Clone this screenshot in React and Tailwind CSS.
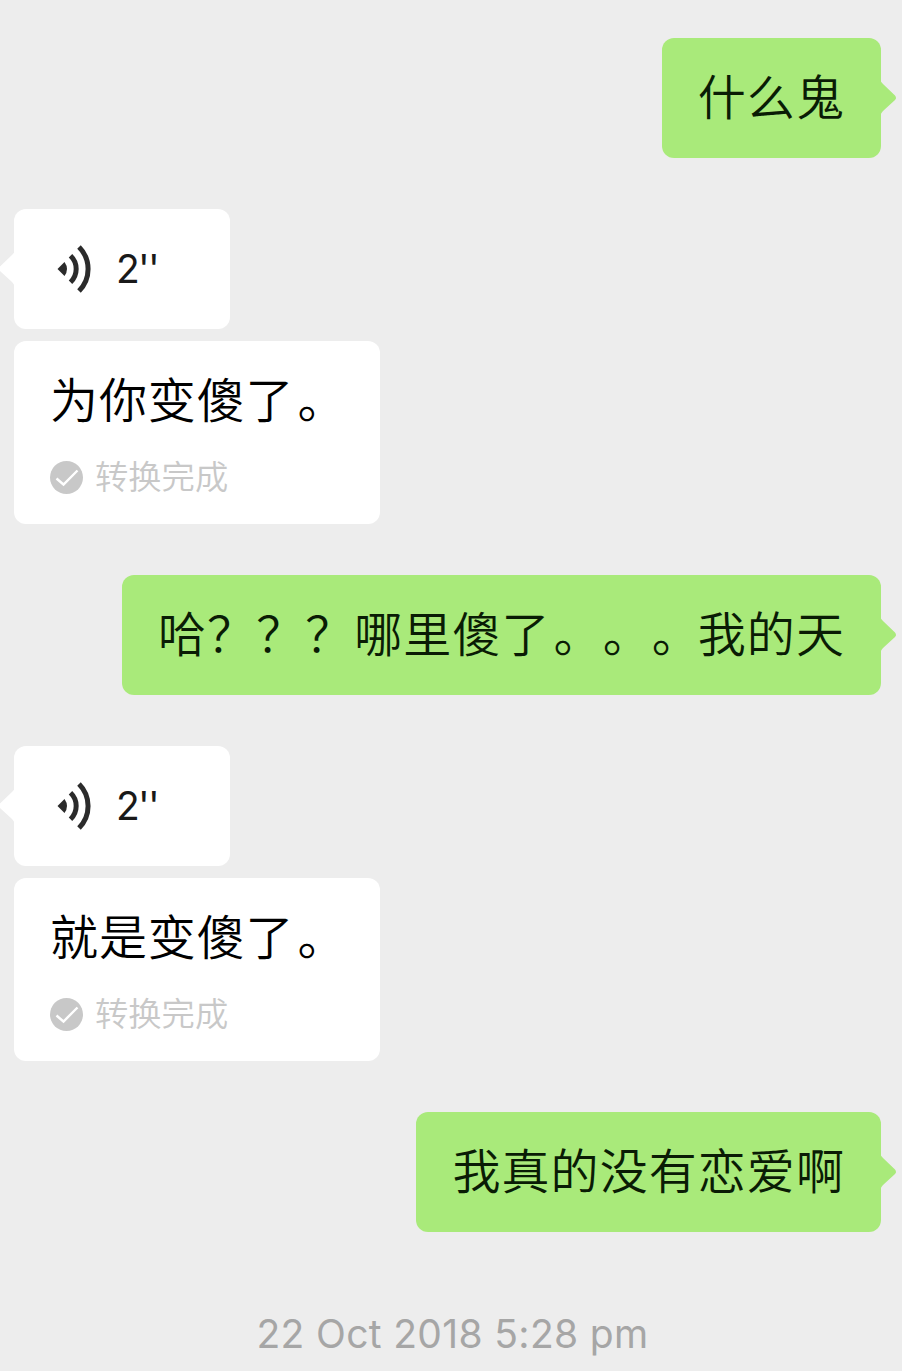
import React from 'react';

const messages = [
  { id: 1, type: 'sent', text: '什么鬼' },
  { id: 2, type: 'voice', seconds: 2, text: '为你变傻了。' },
  { id: 3, type: 'sent', text: '哈？？？哪里傻了。。。我的天' },
  { id: 4, type: 'voice', seconds: 2, text: '就是变傻了。' },
  { id: 5, type: 'sent', text: '我真的没有恋爱啊' },
];

// Full-width stops sit a little further into their cell than the font puts them
function MessageText({ text }) {
  return text.split(/(。+)/).map((part, i) =>
    part.startsWith('。') ? (
      <span key={i} className="relative left-[3px]">{part}</span>
    ) : (
      part
    )
  );
}

function SentMessage({ text }) {
  return (
    <div className="relative mr-[21px] flex h-[120px] items-center self-end rounded-xl bg-[#a9ea7a] px-9">
      <p className="whitespace-nowrap text-[48px] leading-[68px] font-[350] tracking-[1.07px] text-[#0a1c05] [text-spacing-trim:space-all]">
        <MessageText text={text} />
      </p>
      {/* Tail */}
      <svg className="absolute top-[42px] -right-[16px] h-9 w-[17px]" viewBox="0 0 17 36" fill="#a9ea7a">
        <path d="M0 0Q1 2 3 4L15 15.5Q17 18 15 20L3 31Q1 33 0 36Z" />
      </svg>
    </div>
  );
}

function VoiceIcon() {
  return (
    <svg className="h-[50px] w-9" viewBox="0 0 36 50" fill="none" stroke="#2b2b2b" strokeWidth="5">
      <path d="M.5 25L7.5 18Q12.5 25 7.5 32Z" fill="#2b2b2b" stroke="none" />
      <path d="M13.5 11.8A18.2 18.2 0 0 1 13.5 38.2" />
      <path d="M22 3A31.2 31.2 0 0 1 22 47" />
    </svg>
  );
}

function VoiceMessage({ seconds, text }) {
  return (
    <div className="ml-[14px] flex flex-col items-start gap-3">
      <div className="relative flex h-[120px] w-[216px] items-center rounded-xl bg-white pl-[43px]">
        <svg className="absolute top-[42px] -left-[16px] h-9 w-[17px]" viewBox="0 0 17 36" fill="#fff">
          <path d="M17 0Q16 2 14 4L2 15.5Q0 18 2 20L14 31Q16 33 17 36Z" />
        </svg>
        <VoiceIcon />
        <span className="ml-[23px] text-[39px] tracking-[-1.8px] text-[#191919]">{seconds}''</span>
      </div>

      {/* Transcript */}
      <div className="h-[183px] w-[366px] rounded-xl bg-white px-9 pt-[26px]">
        <p className="whitespace-nowrap text-[48px] leading-[68px] font-[350] tracking-[.9px] text-black [text-spacing-trim:space-all]">
          <MessageText text={text} />
        </p>
        <div className="mt-[18px] flex items-center gap-3 text-[33.3px] leading-[48px] font-[350] text-[#c8c8c8]">
          <svg className="h-[33px] w-[33px]" viewBox="0 0 33 33" fill="none">
            <circle cx="16.5" cy="16.5" r="16.5" fill="#c8c8c8" />
            <path d="M6.5 17.5L13.5 23.5L27.5 9.5" stroke="#fff" strokeWidth="2.4" />
          </svg>
          <span>转换完成</span>
        </div>
      </div>
    </div>
  );
}

function App() {
  return (
    <main className="flex h-[1371px] w-full flex-col gap-[51px] overflow-hidden bg-[#ededed] pt-[38px] font-['Inter','Noto_Sans_CJK_SC',sans-serif]">
      {messages.map((message) =>
        message.type === 'sent' ? (
          <SentMessage key={message.id} text={message.text} />
        ) : (
          <VoiceMessage key={message.id} seconds={message.seconds} text={message.text} />
        )
      )}
      <time className="mt-[26px] ml-[3px] self-center text-[39px] leading-[50px] tracking-[.35px] text-[#a6a6a6]">22 Oct 2018 5:28 pm</time>
    </main>
  );
}

export default App;
